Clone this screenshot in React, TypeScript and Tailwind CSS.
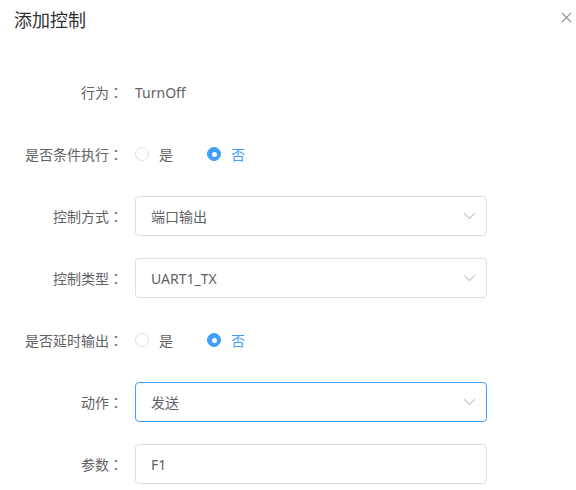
import React from "react";

const FONT = '"Noto Sans", "Noto Sans CJK SC", sans-serif';

function Chevron() {
  return (
    <svg width="13" height="8" viewBox="0 0 13 8" fill="none">
      <path d="M1 1.2 L6.5 6.5 L12 1.2" stroke="#c0c4cc" strokeWidth="1.1" />
    </svg>
  );
}

function Row({ label, children }: { label: string; children: React.ReactNode }) {
  return (
    <div className="flex h-10 items-center mb-[22px]">
      <div className="w-[135px] shrink-0 pr-3 text-right text-[14px] text-[#606266]">
        {label}
        <span style={{ fontFamily: '"Noto Sans CJK TC", sans-serif' }}>：</span>
      </div>
      <div className="flex-1 flex items-center">{children}</div>
    </div>
  );
}

function Radio({ label, checked }: { label: string; checked?: boolean }) {
  return (
    <div className="flex items-center mr-[34px]">
      {checked ? (
        <span className="w-[14px] h-[14px] rounded-full bg-[#409eff] border border-[#409eff] flex items-center justify-center">
          <span className="w-[5px] h-[5px] rounded-full bg-white" />
        </span>
      ) : (
        <span className="w-[14px] h-[14px] rounded-full border border-[#dcdfe6] bg-white" />
      )}
      <span className={"pl-[10px] text-[14px] " + (checked ? "text-[#409eff]" : "text-[#606266]")}>{label}</span>
    </div>
  );
}

function Select({ value, focus, arrow = true }: { value: string; focus?: boolean; arrow?: boolean }) {
  return (
    <div
      className={
        "w-[352px] h-10 rounded-[4px] border flex items-center justify-between pl-[15px] pr-[10px] text-[14px] text-[#606266] " +
        (focus ? "border-[#409eff]" : "border-[#dcdfe6]")
      }
    >
      <span>{value}</span>
      {arrow && <Chevron />}
    </div>
  );
}

export default function App() {
  return (
    <div className="w-[576px] h-[490px] bg-white overflow-hidden relative" style={{ fontFamily: FONT }}>
      <div className="h-[72px] px-[14px] pt-[6px]">
        <div className="text-[18px] leading-[28px] text-[#303133]">添加控制</div>
      </div>
      <button className="absolute left-[561px] top-[12px] w-[11px] h-[11px]">
        <svg width="11" height="11" viewBox="0 0 11 11">
          <path d="M1 1 L10 10 M10 1 L1 10" stroke="#909399" strokeWidth="1.1" />
        </svg>
      </button>
      <div>
        <Row label="行为">
          <span className="text-[14px] text-[#606266]">TurnOff</span>
        </Row>
        <Row label="是否条件执行">
          <Radio label="是" />
          <Radio label="否" checked />
        </Row>
        <Row label="控制方式">
          <Select value="端口输出" />
        </Row>
        <Row label="控制类型">
          <Select value="UART1_TX" />
        </Row>
        <Row label="是否延时输出">
          <Radio label="是" />
          <Radio label="否" checked />
        </Row>
        <Row label="动作">
          <Select value="发送" focus />
        </Row>
        <Row label="参数">
          <Select value="F1" arrow={false} />
        </Row>
      </div>
    </div>
  );
}
